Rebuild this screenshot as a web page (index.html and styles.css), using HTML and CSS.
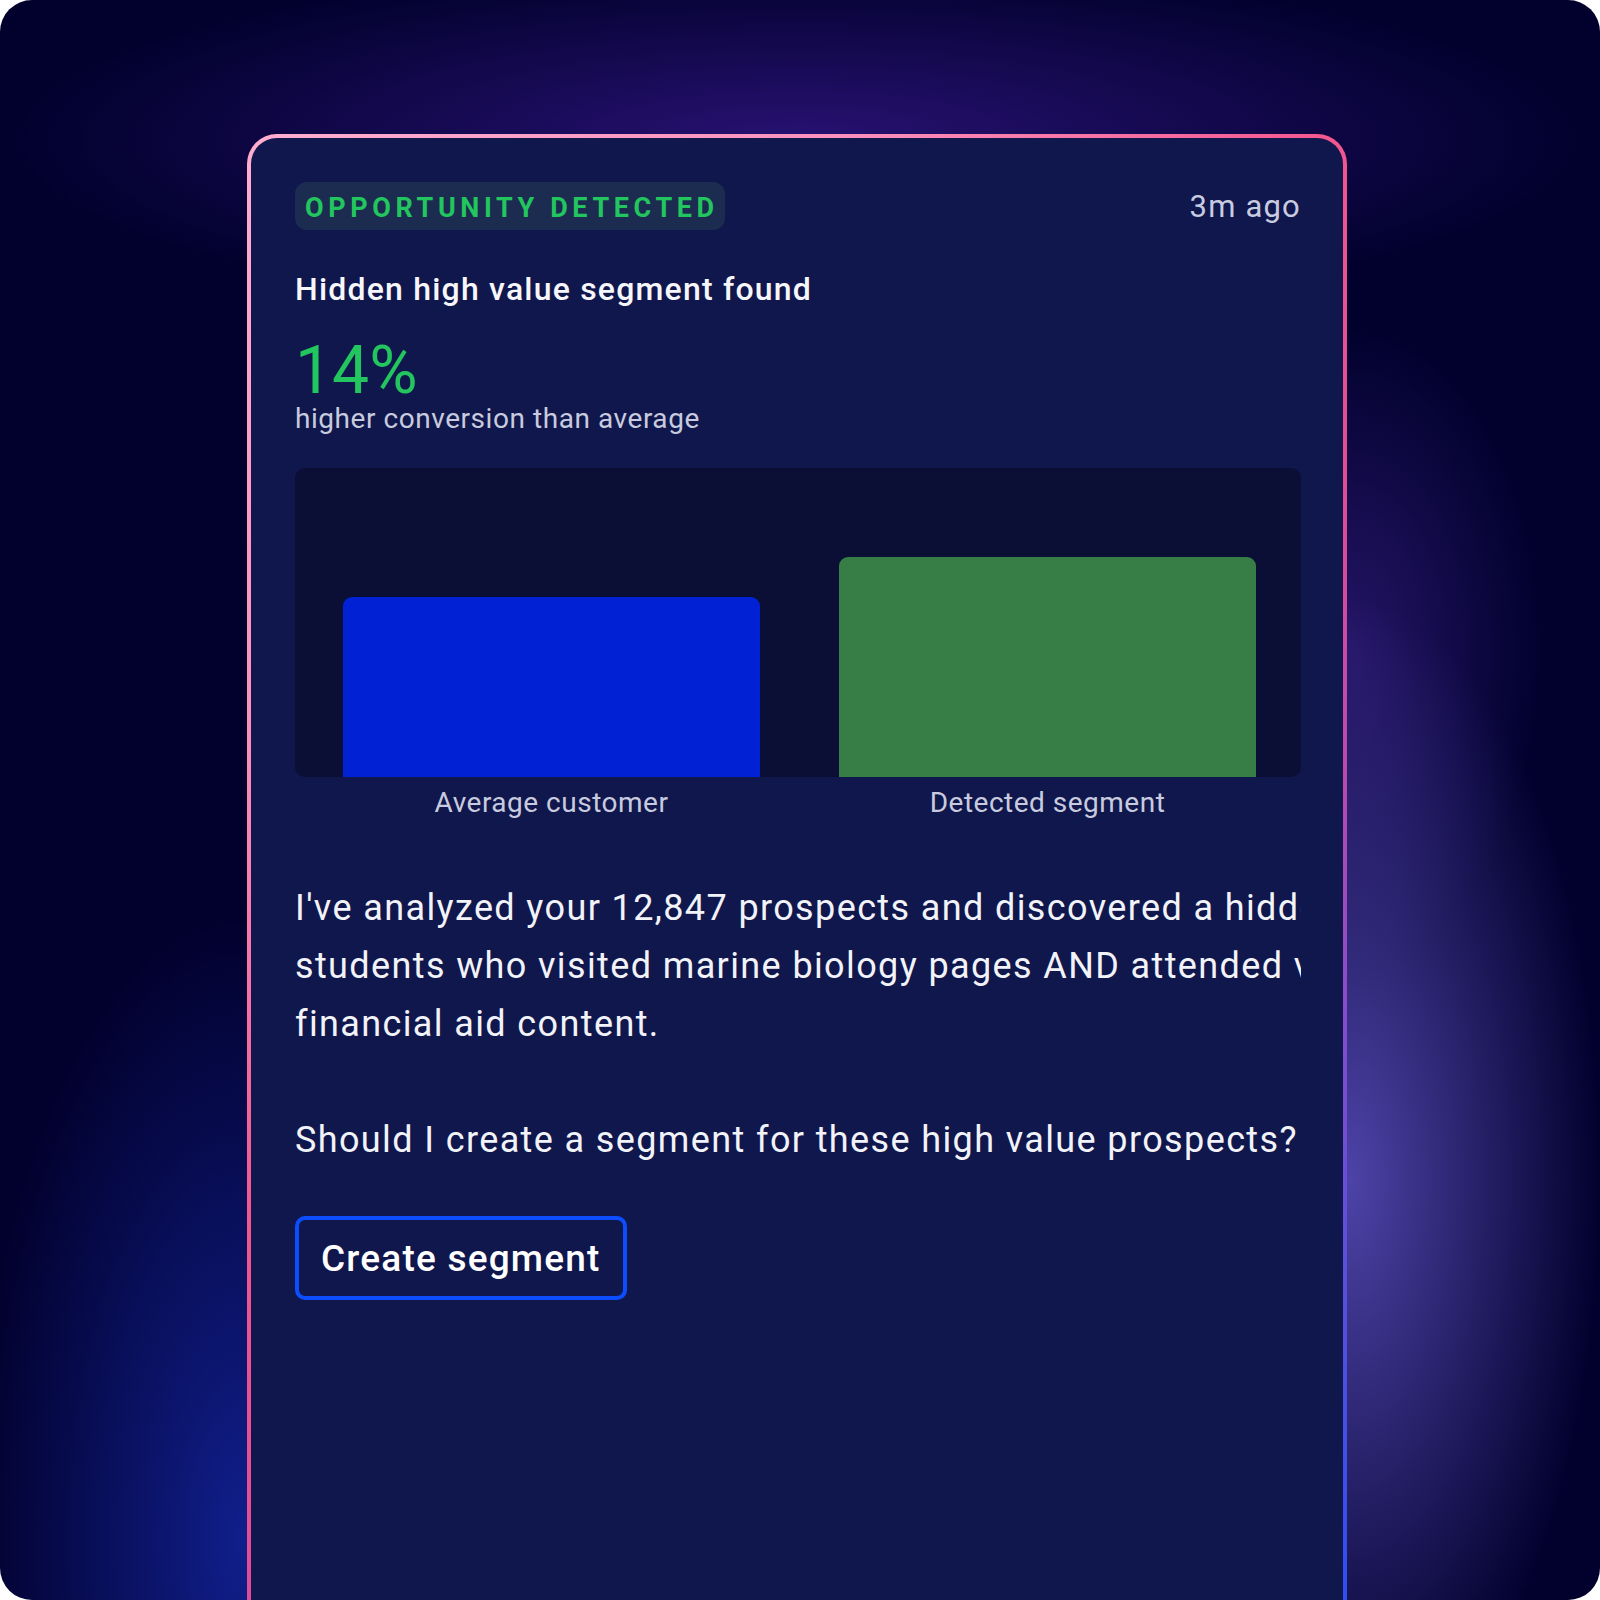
FILE: index.html
```html
<!DOCTYPE html>
<html lang="en">
<head>
<meta charset="utf-8">
<title>Opportunity detected</title>
<link rel="stylesheet" href="styles.css">
</head>
<body>
<div class="frame">
  <section class="card">
    <header class="head">
      <span class="badge">OPPORTUNITY DETECTED</span>
      <span class="time">3m ago</span>
    </header>
    <h2 class="title">Hidden high value segment found</h2>
    <div class="stat">
      <div class="stat-num">14%</div>
      <div class="stat-label">higher conversion than average</div>
    </div>
    <div class="chart">
      <div class="plot">
        <div class="bar bar-avg" style="height:180px"></div>
        <div class="bar bar-seg" style="height:220px"></div>
      </div>
      <div class="labels">
        <span>Average customer</span>
        <span>Detected segment</span>
      </div>
    </div>
    <div class="message">
      <p class="line">I've analyzed your 12,847 prospects and discovered a hidden segment of</p>
      <p class="line">students who visited marine biology pages AND attended virtual tours AND viewed</p>
      <p class="line">financial aid content.</p>
      <p class="line blank">&nbsp;</p>
      <p class="line">Should I create a segment for these high value prospects?</p>
    </div>
    <button class="cta" type="button">Create segment</button>
  </section>
</div>
</body>
</html>
```

FILE: styles.css
```css
* { box-sizing: border-box; }

html, body {
  margin: 0;
  padding: 0;
  background: #ffffff;
}

body {
  font-family: Roboto, "Noto Sans", "Liberation Sans", sans-serif;
  color: #f2f3f8;
}

.frame {
  width: 1600px;
  height: 1600px;
  border-radius: 32px;
  overflow: hidden;
  padding: 134px 0 0 247px;
  background:
    radial-gradient(ellipse 250px 580px at 1350px 1180px, rgba(88, 76, 184, 0.88), rgba(88, 76, 184, 0) 100%),
    radial-gradient(ellipse 190px 320px at 1350px 650px, rgba(60, 34, 140, 0.6), rgba(60, 34, 140, 0) 100%),
    radial-gradient(ellipse 270px 620px at 245px 1540px, rgba(18, 34, 150, 0.9), rgba(18, 34, 150, 0) 100%),
    radial-gradient(ellipse 780px 175px at 797px 140px, rgba(42, 18, 118, 0.95), rgba(42, 18, 118, 0) 100%),
    #02012e;
}

.card {
  width: 1100px;
  height: 1620px;
  border: 4px solid transparent;
  border-radius: 30px;
  padding: 44px 42px 0 44px;
  background:
    linear-gradient(#10174c, #10174c) padding-box,
    linear-gradient(135deg, #ffaed0 0%, #fb90bd 22%, #f3578f 40%, #e24c96 53%, #b84aae 64%, #7e4dd0 74%, #5250de 84%, #1a4cff 100%) border-box;
  display: flex;
  flex-direction: column;
  align-items: flex-start;
}

.head {
  width: 100%;
  display: flex;
  justify-content: space-between;
  align-items: center;
  height: 48px;
}

.badge {
  height: 48px;
  display: flex;
  align-items: center;
  padding: 4px 6px 0 10px;
  border-radius: 12px;
  background: #1c2c51;
  color: #22c55e;
  font-weight: 700;
  font-size: 27px;
  letter-spacing: 4.6px;
}

.time {
  font-size: 31px;
  letter-spacing: 1.2px;
  color: #c9cce0;
  font-weight: 400;
}

.title {
  margin: 39px 0 0;
  font-size: 32px;
  line-height: 40px;
  letter-spacing: 1.2px;
  font-weight: 500;
  color: #f7f7fb;
}

.stat {
  margin-top: 31px;
}

.stat-num {
  font-size: 66px;
  line-height: 62px;
  color: #22c55e;
  font-weight: 400;
}

.stat-label {
  font-size: 28px;
  line-height: 34px;
  letter-spacing: 0.55px;
  color: #c8cbdf;
}

.chart {
  width: 100%;
  margin-top: 32px;
}

.plot {
  height: 309px;
  background: #0b0e35;
  border-radius: 10px;
  display: flex;
  align-items: flex-end;
  gap: 79px;
  padding: 0 45px 0 48px;
}

.bar {
  flex: 1;
  border-radius: 9px 9px 0 0;
}

.bar-avg { background: #0021d4; }
.bar-seg { background: #367d46; }

.labels {
  display: flex;
  gap: 79px;
  padding: 0 45px 0 48px;
  margin-top: 8px;
}

.labels span {
  flex: 1;
  text-align: center;
  font-size: 28px;
  line-height: 36px;
  letter-spacing: 0.5px;
  color: #c8cbdf;
}

.message {
  width: 100%;
  margin-top: 58px;
  overflow: hidden;
}

.line {
  margin: 0;
  white-space: nowrap;
  font-size: 36px;
  line-height: 58px;
  letter-spacing: 1.38px;
  color: #f2f3f9;
}

.cta {
  margin-top: 47px;
  height: 84px;
  padding: 0 22px;
  border: 4px solid #0b4dff;
  border-radius: 10px;
  background: transparent;
  color: #ffffff;
  font-family: inherit;
  font-size: 37px;
  letter-spacing: 1.2px;
  font-weight: 500;
  cursor: pointer;
}
```
